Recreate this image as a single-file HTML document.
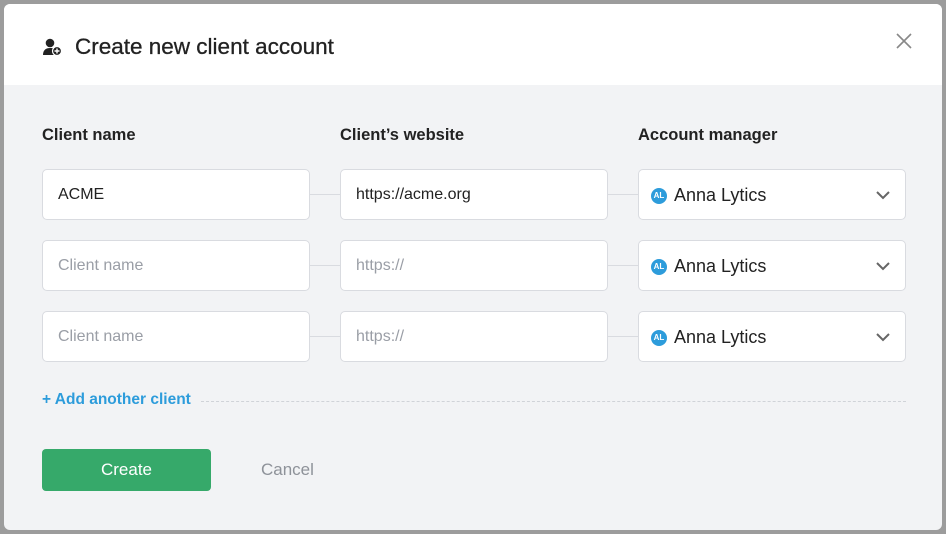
<!DOCTYPE html>
<html><head><style>
body{margin:0;width:946px;height:534px;background:#9c9c9c;font-family:"Liberation Sans",sans-serif;position:relative;overflow:hidden}
.m{position:absolute;left:4px;top:4px;width:938px;height:526px;background:#f2f3f5;border-radius:6px;overflow:hidden}
.h{position:absolute;left:0;top:0;width:938px;height:81px;background:#fff}
.a{position:absolute}
.lb{position:absolute;top:126px;font-size:16.5px;font-weight:bold;color:#222}
.f{position:absolute;width:268px;height:51px;background:#fff;border:1px solid #d9dbe0;border-radius:5px;box-sizing:border-box;font-size:16px;line-height:49px;padding-left:15px;color:#222}
.ph{color:#9a9ea6}
.ln{position:absolute;width:31px;height:1px;background:#d9dbe0}
.av{display:inline-block;width:16px;height:16px;border-radius:50%;background:#2d9cdb;color:#fff;font-size:8px;font-weight:bold;line-height:16px;text-align:center;vertical-align:3px;margin-left:-3px;margin-right:7px}
.sel{font-size:18px;line-height:51px}
</style></head><body>
<div class="m">
<div class="h"></div>
</div>
<svg class="a" style="left:43px;top:38px" width="20" height="18" viewBox="0 0 20 18"><circle cx="7" cy="5" r="4.3" fill="#222"/><path d="M0 17c0-5 3-7 7-7s5 1 6 2v5z" fill="#222"/><circle cx="14" cy="13" r="4.5" fill="#222" stroke="#fff" stroke-width="1.2"/><path d="M14 10.5v5M11.5 13h5" stroke="#fff" stroke-width="1.4"/></svg>
<div class="a" style="left:75px;top:34px;font-size:22.5px;color:#222;-webkit-text-stroke:0.3px #222">Create new client account</div>
<svg class="a" style="left:896px;top:33px" width="16" height="16"><path d="M1 1L15 15M15 1L1 15" stroke="#888" stroke-width="1.6"/></svg>
<div class="lb" style="left:42px">Client name</div>
<div class="lb" style="left:340px">Client’s website</div>
<div class="lb" style="left:638px">Account manager</div>

<div class="f" style="left:42px;top:169px">ACME</div>
<div class="f" style="left:340px;top:169px">https://acme.org</div>
<div class="f sel" style="left:638px;top:169px"><span class="av">AL</span>Anna Lytics</div>

<div class="f ph" style="left:42px;top:240px">Client name</div>
<div class="f ph" style="left:340px;top:240px">https://</div>
<div class="f sel" style="left:638px;top:240px"><span class="av">AL</span>Anna Lytics</div>

<div class="f ph" style="left:42px;top:311px">Client name</div>
<div class="f ph" style="left:340px;top:311px">https://</div>
<div class="f sel" style="left:638px;top:311px"><span class="av">AL</span>Anna Lytics</div>

<div class="ln" style="left:310px;top:194px;width:30px"></div><div class="ln" style="left:608px;top:194px;width:30px"></div>
<div class="ln" style="left:310px;top:265px;width:30px"></div><div class="ln" style="left:608px;top:265px;width:30px"></div>
<div class="ln" style="left:310px;top:336px;width:30px"></div><div class="ln" style="left:608px;top:336px;width:30px"></div>

<svg class="a" style="left:876px;top:191px" width="14" height="9"><path d="M1 1l6 6 6-6" fill="none" stroke="#666" stroke-width="2"/></svg>
<svg class="a" style="left:876px;top:262px" width="14" height="9"><path d="M1 1l6 6 6-6" fill="none" stroke="#666" stroke-width="2"/></svg>
<svg class="a" style="left:876px;top:333px" width="14" height="9"><path d="M1 1l6 6 6-6" fill="none" stroke="#666" stroke-width="2"/></svg>

<div class="a" style="left:42px;top:391px;font-size:15.5px;font-weight:bold;color:#2d9cdb">+ Add another client</div>
<div class="a" style="left:201px;top:401px;width:705px;border-top:1px dashed #d0d3d8"></div>
<div class="a" style="left:42px;top:449px;width:169px;height:42px;background:#36a96a;border-radius:4px;color:#fff;font-size:17px;line-height:42px;text-align:center">Create</div>
<div class="a" style="left:261px;top:460px;font-size:17px;color:#8e9299">Cancel</div>
</body></html>
